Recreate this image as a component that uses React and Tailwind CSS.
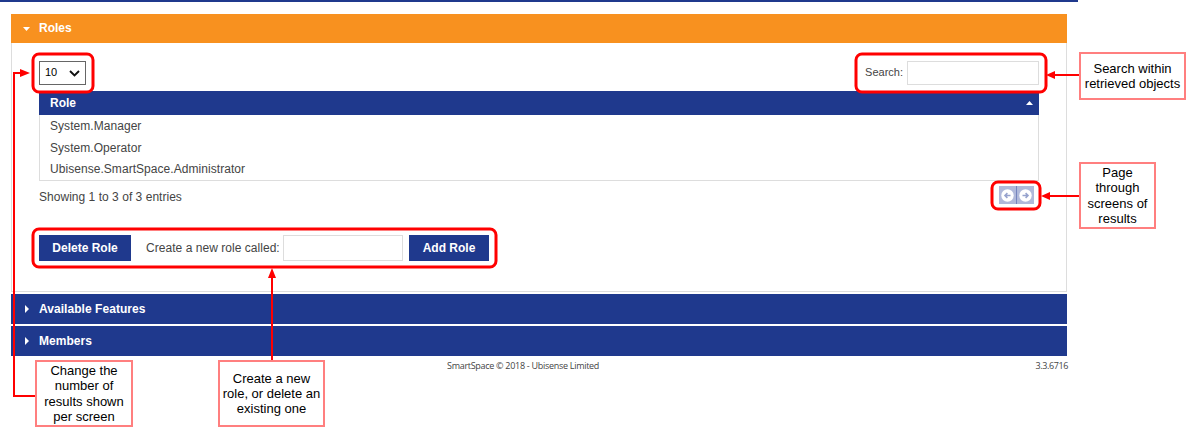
const roles = ['System.Manager', 'System.Operator', 'Ubisense.SmartSpace.Administrator'];

function Section({ title }) {
  return (
    <div className="mt-0.5 flex h-[30px] items-center bg-[#1f398d] pl-[14px] text-white">
      <svg width="4" height="8" viewBox="0 0 4 8" className="shrink-0">
        <path d="M0 0L4 4L0 8Z" fill="white" />
      </svg>
      <span className="ml-[10px] text-[12px] font-bold tracking-[0.05px]">{title}</span>
    </div>
  );
}

function PageButton({ flip }) {
  return (
    <button className="flex h-[18px] w-[17px] items-center justify-center bg-[#b0b9da]">
      <svg width="13" height="13" viewBox="0 0 13 13" className={flip ? 'rotate-180' : ''}>
        <circle cx="6.5" cy="6.5" r="6.2" fill="white" />
        <path d="M9.5 6.5H4.5M6.4 4.1L4 6.5L6.4 8.9" fill="none" stroke="#97a3ce" strokeWidth="1.6" />
      </svg>
    </button>
  );
}

function Callout({ className, lines }) {
  return (
    <div className={`absolute flex flex-col items-center justify-center border-2 border-[#ff7f7f] bg-white text-[13px] leading-[15.3px] whitespace-nowrap text-black ${className}`}>
      {lines.map((line) => (
        <span key={line}>{line}</span>
      ))}
    </div>
  );
}

export default function App() {
  return (
    <div className="relative h-[438px] w-[1197px] overflow-hidden bg-white font-['Liberation_Sans',Arial,sans-serif] text-[12px] text-[#444]">
      <div className="h-[2px] w-[1078px] bg-[#1f398d]" />
      <main className="mt-3 ml-[11px] w-[1056px]">
        <div className="flex h-[29px] items-center bg-[#f8911f] pl-3 text-white">
          <svg width="7" height="4" viewBox="0 0 7 4">
            <path d="M0 0H7L3.5 4Z" fill="white" />
          </svg>
          <span className="ml-[9px] pb-px font-bold">Roles</span>
        </div>
        <section className="h-[249px] border border-t-0 border-[#ddd] px-[27px] pt-[18px]">
          <div className="flex h-6 items-center justify-between">
            <div className="flex h-6 w-[47px] items-center justify-between border border-[#666] pr-[5px] pl-[5px] text-[11px] text-black">
              <span className="pb-[1.5px]">10</span>
              <svg width="11" height="7" viewBox="0 0 11 7">
                <path d="M1 1L5.5 5.5L10 1" fill="none" stroke="#111" strokeWidth="1.9" />
              </svg>
            </div>
            <label className="flex items-center text-[11px]">
              <span className="pb-[1.5px]">Search:</span>
              <input className="ml-1 h-6 w-[132px] border border-[#ddd]" />
            </label>
          </div>
          <div className="mt-1.5 h-[90px] border border-t-0 border-[#ddd]">
            <div className="-mx-px flex h-6 items-center justify-between bg-[#1f398d] pr-[6px] pl-[11px] font-bold text-white">
              <span>Role</span>
              <svg width="7" height="4" viewBox="0 0 7 4">
                <path d="M0 4H7L3.5 0Z" fill="white" />
              </svg>
            </div>
            {roles.map((role) => (
              <div key={role} className="flex h-[21.75px] items-center pl-[10px] tracking-[0.05px]">{role}</div>
            ))}
          </div>
          <div className="mt-[5px] flex h-[18px] items-center justify-between pr-[5px]">
            <span className="pt-[3px] tracking-[0.03px]">Showing 1 to 3 of 3 entries</span>
            <div className="flex gap-px bg-[#7584bd]">
              <PageButton />
              <PageButton flip />
            </div>
          </div>
          <div className="mt-[31px] flex h-[26px] items-center">
            <button className="h-[26px] w-[92px] bg-[#1f398d] font-bold text-white">Delete Role</button>
            <span className="ml-[15px] w-[137px] tracking-[0.04px] whitespace-nowrap">Create a new role called:</span>
            <input className="h-[26px] w-[120px] border border-[#ddd]" />
            <button className="ml-1.5 h-[26px] w-20 bg-[#1f398d] font-bold text-white">Add Role</button>
          </div>
        </section>
        <Section title="Available Features" />
        <Section title="Members" />
        <footer className="mt-[3px] flex w-[1057px] justify-between pl-[436px] font-['Open_Sans',sans-serif] text-[9px] leading-[14px]">
          <span className="tracking-[-0.29px]">SmartSpace © 2018 - Ubisense Limited</span>
          <span className="tracking-[-0.4px]">3.3.6716</span>
        </footer>
      </main>

      <svg className="absolute inset-0" width="1197" height="438" viewBox="0 0 1197 438">
        <g fill="none" stroke="#ff0000" strokeWidth="3">
          <rect x="33" y="54" width="60" height="38" rx="6" />
          <rect x="856" y="54" width="190" height="38" rx="6" />
          <rect x="992" y="182" width="48" height="27" rx="6" />
          <rect x="33" y="229" width="463" height="38" rx="6" />
        </g>
        <g fill="none" stroke="#ff0000" strokeWidth="2">
          <path d="M36 396H14V73H22" />
          <path d="M272 362V276" />
          <path d="M1080 75H1053" />
          <path d="M1080 196H1048" />
        </g>
        <g fill="#ff0000">
          <path d="M30 73L20 69V77Z" />
          <path d="M272 268L268 278H276Z" />
          <path d="M1046 75L1055 71V79Z" />
          <path d="M1041 196L1050 192V200Z" />
        </g>
      </svg>
      <Callout className="top-[52px] left-[1079px] h-[48px] w-[107px]" lines={['Search within', 'retrieved objects']} />
      <Callout className="top-[162px] left-[1079px] h-[67px] w-[77px]" lines={['Page', 'through', 'screens of', 'results']} />
      <Callout className="top-[360px] left-[35px] h-[67px] w-[98px]" lines={['Change the', 'number of', 'results shown', 'per screen']} />
      <Callout className="top-[360px] left-[218px] h-[67px] w-[107px]" lines={['Create a new', 'role, or delete an', 'existing one']} />
    </div>
  );
}
